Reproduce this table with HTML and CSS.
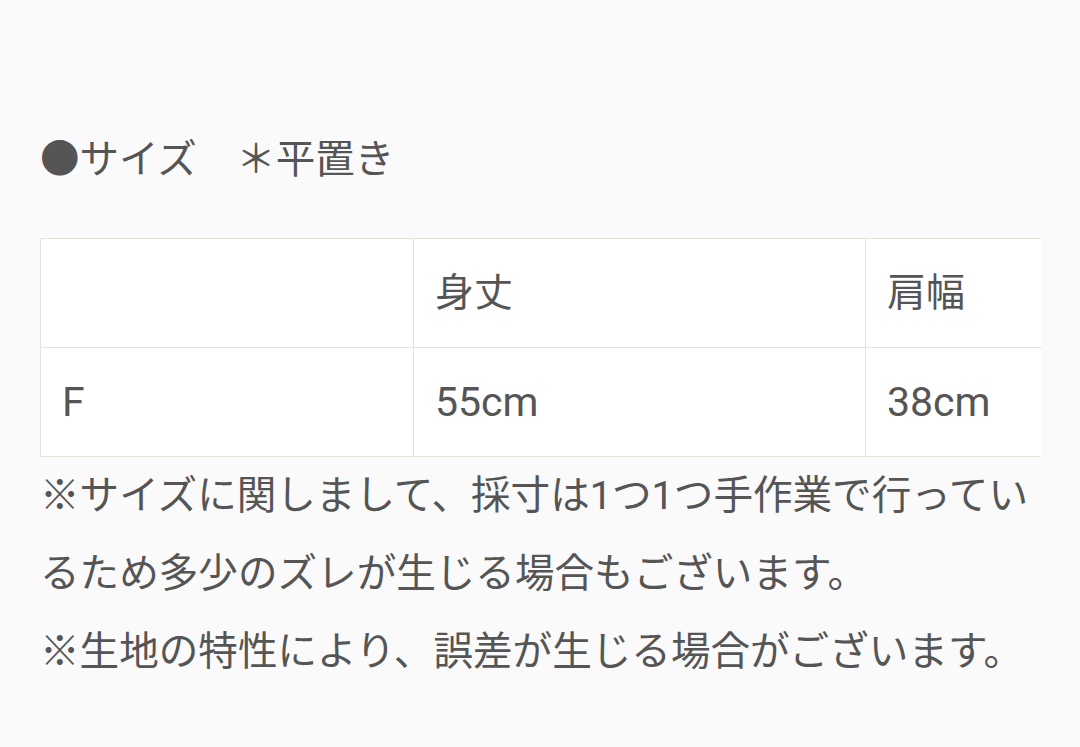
FILE: index.html
```html
<!DOCTYPE html>
<html lang="ja">
<head>
<meta charset="utf-8">
<link rel="stylesheet" href="styles.css">
</head>
<body>
<main class="page">
  <h2 class="heading">●サイズ　＊平置き</h2>
  <div class="table-wrap">
    <table class="size-table">
      <colgroup>
        <col class="c1"><col class="c2"><col class="c3">
      </colgroup>
      <tr>
        <td></td>
        <td>身丈</td>
        <td>肩幅</td>
      </tr>
      <tr class="num-row">
        <td>F</td>
        <td>55cm</td>
        <td>38cm</td>
      </tr>
    </table>
  </div>
  <p class="note">※サイズに関しまして、採寸は1つ1つ手作業で行っているため多少のズレが生じる場合もございます。</p>
  <p class="note">※生地の特性により、誤差が生じる場合がございます。</p>
</main>
</body>
</html>
```

FILE: styles.css
```css
html, body {
  margin: 0;
  padding: 0;
  background: #fafafa;
}

.page {
  font-family: Roboto, "Noto Sans CJK JP", sans-serif;
  color: #555555;
  padding: 121px 39px 0 40px;
}

.heading {
  margin: 0 0 39px 0;
  font-size: 39.5px;
  font-weight: 400;
  line-height: 78px;
  height: 78px;
}

.table-wrap {
  width: 1001px;
  overflow: hidden;
}

.size-table {
  border-collapse: collapse;
  table-layout: fixed;
  width: 1280px;
  background: #ffffff;
}

.c1 { width: 373px; }
.c2 { width: 452px; }
.c3 { width: 455px; }

.size-table td {
  border: 1px solid #e4e2d9;
  height: 108px;
  padding: 0 0 0 21px;
  font-size: 39px;
  line-height: 50px;
  vertical-align: middle;
}

.num-row td {
  font-size: 41px;
}

.note {
  margin: 0;
  font-size: 39.6px;
  line-height: 78px;
}
```
